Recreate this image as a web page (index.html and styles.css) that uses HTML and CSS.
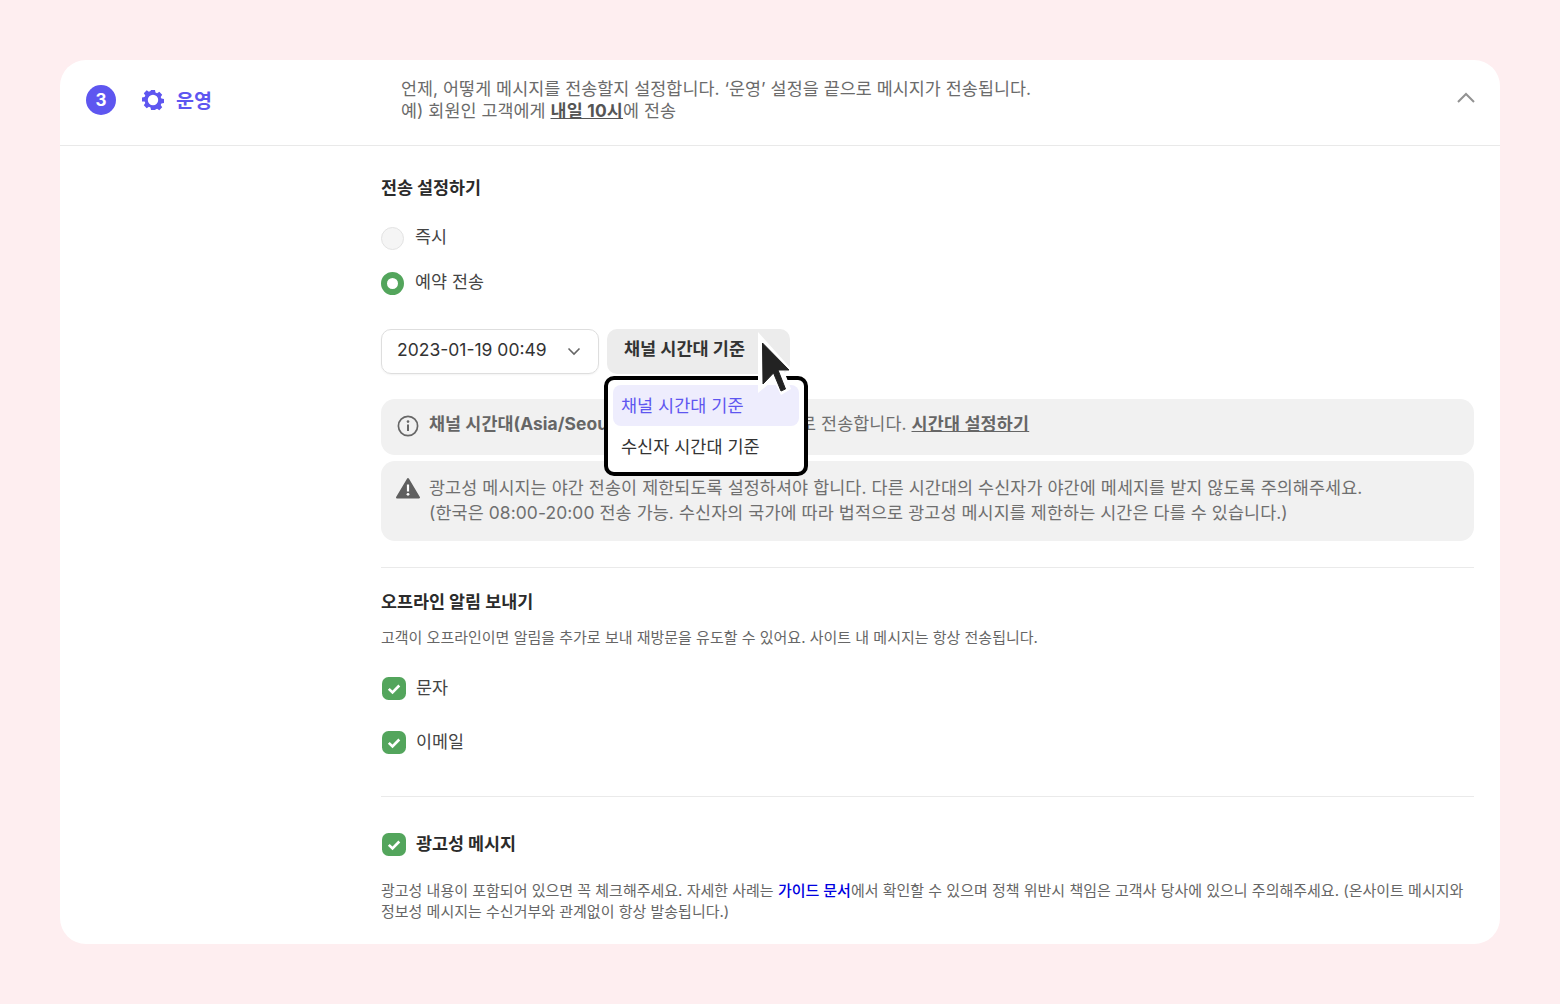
FILE: index.html
```html
<!DOCTYPE html>
<html lang="ko">
<head>
<meta charset="utf-8">
<title>운영</title>
<link rel="stylesheet" href="styles.css">
</head>
<body>
<main class="card">
  <header class="head">
    <div class="step">
      <span class="num">3</span>
      <svg class="gear" width="24" height="24" viewBox="0 0 24 24"><path fill="#5e56f0" fill-rule="evenodd" d="M10 2h4l.5 2.6 1.6.7 2.2-1.5 2.9 2.9-1.5 2.2.7 1.6 2.6.5v4l-2.6.5-.7 1.6 1.5 2.2-2.9 2.9-2.2-1.5-1.6.7L14 22h-4l-.5-2.6-1.6-.7-2.2 1.5-2.9-2.9 1.5-2.2-.7-1.6L1 13.500v-4l2.600-.5.7-1.600-1.500-2.200 2.900-2.900 2.200 1.500 1.600-.7zM12 6.800a5.200 5.200 0 1 0 0 10.400 5.200 5.200 0 0 0 0-10.400z"/></svg>
      <span class="step-name">운영</span>
    </div>
    <p class="desc">언제, 어떻게 메시지를 전송할지 설정합니다. ‘운영’ 설정을 끝으로 메시지가 전송됩니다.<br>예) 회원인 고객에게 <b class="ul">내일 10시</b>에 전송</p>
    <svg class="chev" width="20" height="12" viewBox="0 0 20 12"><path d="M2 10l8-8 8 8" fill="none" stroke="#929292" stroke-width="2"/></svg>
  </header>
  <section class="body">
    <h3 class="title t1">전송 설정하기</h3>
    <label class="radio r1"><span class="dot"></span>즉시</label>
    <label class="radio r2"><span class="dot on"></span>예약 전송</label>
    <div class="pick">
      <div class="date">2023-01-19 00:49<svg width="14" height="9" viewBox="0 0 14 9"><path d="M1.500 1.500L7 7l5.500-5.500" fill="none" stroke="#666" stroke-width="1.600"/></svg></div>
      <div class="zone-wrap">
        <div class="zone">채널 시간대 기준</div>
        <div class="menu">
          <div class="opt sel">채널 시간대 기준</div>
          <div class="opt">수신자 시간대 기준</div>
        </div>
        <svg class="cursor" width="44" height="66" viewBox="0 0 44 66"><path d="M1 1L36 40H27L34 58 24 64 16.500 49 1 62z" fill="#fff"/><path d="M5.500 12L32 39H21L28.500 58 24 60 16.500 42 6 53z" fill="#222" stroke="#222" stroke-width="1" stroke-linejoin="round"/></svg>
      </div>
    </div>
    <div class="notice n1"><svg class="ic" width="22" height="22" viewBox="0 0 22 22"><circle cx="11" cy="11" r="9.600" fill="none" stroke="#666" stroke-width="1.700"/><path d="M11 9.500v6.500" stroke="#666" stroke-width="2"/><circle cx="11" cy="6.600" r="1.300" fill="#666"/></svg><p><b>채널 시간대(Asia/Seoul)</b>에 맞춰 예약 시각 기준으로 전송합니다. <b class="ul">시간대 설정하기</b></p></div>
    <div class="notice n2"><svg class="ic" width="24" height="22" viewBox="0 0 24 22"><path d="M12 2L23 20.500H1z" fill="#5f5f5f" stroke="#5f5f5f" stroke-width="2" stroke-linejoin="round"/><path d="M12 7.500v7" stroke="#fff" stroke-width="2.200"/><circle cx="12" cy="17.300" r="1.400" fill="#fff"/></svg><p>광고성 메시지는 야간 전송이 제한되도록 설정하셔야 합니다. 다른 시간대의 수신자가 야간에 메세지를 받지 않도록 주의해주세요.<br>(한국은 08:00-20:00 전송 가능. 수신자의 국가에 따라 법적으로 광고성 메시지를 제한하는 시간은 다를 수 있습니다.)</p></div>
    <hr class="rule rule1">
    <h3 class="title t2">오프라인 알림 보내기</h3>
    <p class="small s1">고객이 오프라인이면 알림을 추가로 보내 재방문을 유도할 수 있어요. 사이트 내 메시지는 항상 전송됩니다.</p>
    <label class="check c1"><svg class="box" width="24" height="24" viewBox="0 0 24 24"><rect x="0" y="1" width="24" height="23" rx="6.500" fill="#53a55c"/><path d="M6.800 12.800l3.700 3.700 6.800-7" fill="none" stroke="#fff" stroke-width="2.600"/></svg>문자</label>
    <label class="check c2"><svg class="box" width="24" height="24" viewBox="0 0 24 24"><rect x="0" y="1" width="24" height="23" rx="6.500" fill="#53a55c"/><path d="M6.800 12.800l3.700 3.700 6.800-7" fill="none" stroke="#fff" stroke-width="2.600"/></svg>이메일</label>
    <hr class="rule rule2">
    <label class="check c3"><svg class="box" width="24" height="24" viewBox="0 0 24 24"><rect x="0" y="1" width="24" height="23" rx="6.500" fill="#53a55c"/><path d="M6.800 12.800l3.700 3.700 6.800-7" fill="none" stroke="#fff" stroke-width="2.600"/></svg><b>광고성 메시지</b></label>
    <p class="small s2">광고성 내용이 포함되어 있으면 꼭 체크해주세요. 자세한 사례는 <a class="link">가이드 문서</a>에서 확인할 수 있으며 정책 위반시 책임은 고객사 당사에 있으니 주의해주세요. (온사이트 메시지와<br>정보성 메시지는 수신거부와 관계없이 항상 발송됩니다.)</p>
  </section>
</main>
</body>
</html>
```
FILE: styles.css
```css
* { box-sizing: border-box; }
html, body { margin: 0; height: 100%; }
body {
  background: #feeef0;
  padding: 60px;
  overflow: hidden;
  font-family: Inter, "Noto Sans CJK KR", "Noto Sans", sans-serif;
  color: #333;
}
p, h3 { margin: 0; }
.card {
  height: 884px;
  background: #fff;
  border-radius: 26px;
  overflow: hidden;
}
.head {
  height: 86px;
  border-bottom: 1px solid #e9e9e9;
  display: flex;
  align-items: center;
  padding: 0 0 6px 26px;
  position: relative;
}
.step { width: 315px; display: flex; align-items: center; }
.num {
  width: 30px; height: 30px; border-radius: 50%;
  background: #5e56f0; color: #fff;
  font-size: 17px; font-weight: 700;
  display: flex; align-items: center; justify-content: center;
}
.gear { margin-left: 25px; }
.step-name { margin-left: 11px; color: #5e56f0; font-size: 19.500px; font-weight: 700; }
.desc { font-size: 17.400px; line-height: 22px; color: #6b6b6b; letter-spacing: .04px; }
.ul { text-decoration: underline; color: #555; font-weight: 700; letter-spacing: .2px; }
.chev { position: absolute; right: 24px; top: 32px; }
.body { padding: 0 26px 0 321px; }
.title { font-size: 17.400px; font-weight: 700; color: #2b2b2b; line-height: 24px; }
.t1 { margin-top: 30px; }
.radio { display: flex; align-items: flex-start; gap: 11px; font-size: 17.400px; line-height: 24px; color: #444; }
.r1 { margin-top: 25px; }
.r2 { margin-top: 20px; }
.dot {
  width: 23px; height: 23px; margin-top: 2px; border-radius: 50%;
  background: #f5f5f5; border: 1px solid #e3e3e3;
}
.dot.on { background: #fff; border: 6.500px solid #53a55c; }
.pick { display: flex; gap: 8px; margin-top: 34px; }
.date {
  width: 218px; height: 45px;
  border: 1px solid #dedede; border-radius: 10px;
  box-shadow: 0 1px 2px rgba(0,0,0,.05);
  display: flex; align-items: center; justify-content: space-between;
  padding: 0 17px 4px 15px;
  font-size: 17.500px; color: #333;
}
.date svg { margin-top: 4px; }
.zone-wrap { position: relative; }
.zone {
  width: 183px; height: 45px; border-radius: 10px;
  background: #ececec; padding: 0 17px;
  font-size: 17.500px; font-weight: 700; color: #333;
  line-height: 40px; white-space: nowrap;
}
.menu {
  position: absolute; left: -3px; top: 47px; z-index: 2;
  width: 204px; height: 100px;
  background: #fff; border: 4px solid #000; border-radius: 10px;
  padding: 5px;
}
.opt { height: 41px; line-height: 42px; padding: 0 8px; font-size: 17.500px; color: #333; border-radius: 8px; white-space: nowrap; }
.opt.sel { background: #eeedfd; color: #5e56f0; }
.cursor { position: absolute; left: 150px; top: 2px; z-index: 3; }
.notice { background: #f1f1f1; border-radius: 14px; display: flex; padding-left: 16px; color: #6f6f6f; font-size: 17.400px; white-space: nowrap; }
.n1 { margin-top: 25px; height: 56px; align-items: center; gap: 10px; padding-bottom: 6px; }
.n1 p { line-height: 24px; letter-spacing: .07px; }
.n1 .ic { margin-top: 3px; }
.n1 b { color: #666; }
.n2 { margin-top: 6px; height: 80px; gap: 9px; padding-top: 14px; padding-left: 15px; }
.n2 p { line-height: 25px; letter-spacing: .1px; }
.n2 .ic { margin-top: 2px; }
.rule { border: 0; border-top: 1px solid #eaeaea; margin: 0; }
.rule1 { margin-top: 26px; }
.t2 { margin-top: 22px; }
.small { font-size: 15px; line-height: 21px; color: #666; }
.s1 { margin-top: 13px; }
.check { display: flex; align-items: center; gap: 10px; font-size: 17.400px; line-height: 24px; color: #444; }
.check .box { margin-left: 1px; }
.check b { color: #2b2b2b; }
.c1 { margin-top: 28px; }
.c2 { margin-top: 30px; }
.rule2 { margin-top: 42px; }
.c3 { margin-top: 35px; }
.s2 { margin-top: 24px; white-space: nowrap; }
.link { color: #0000e0; font-weight: 500; }
```
